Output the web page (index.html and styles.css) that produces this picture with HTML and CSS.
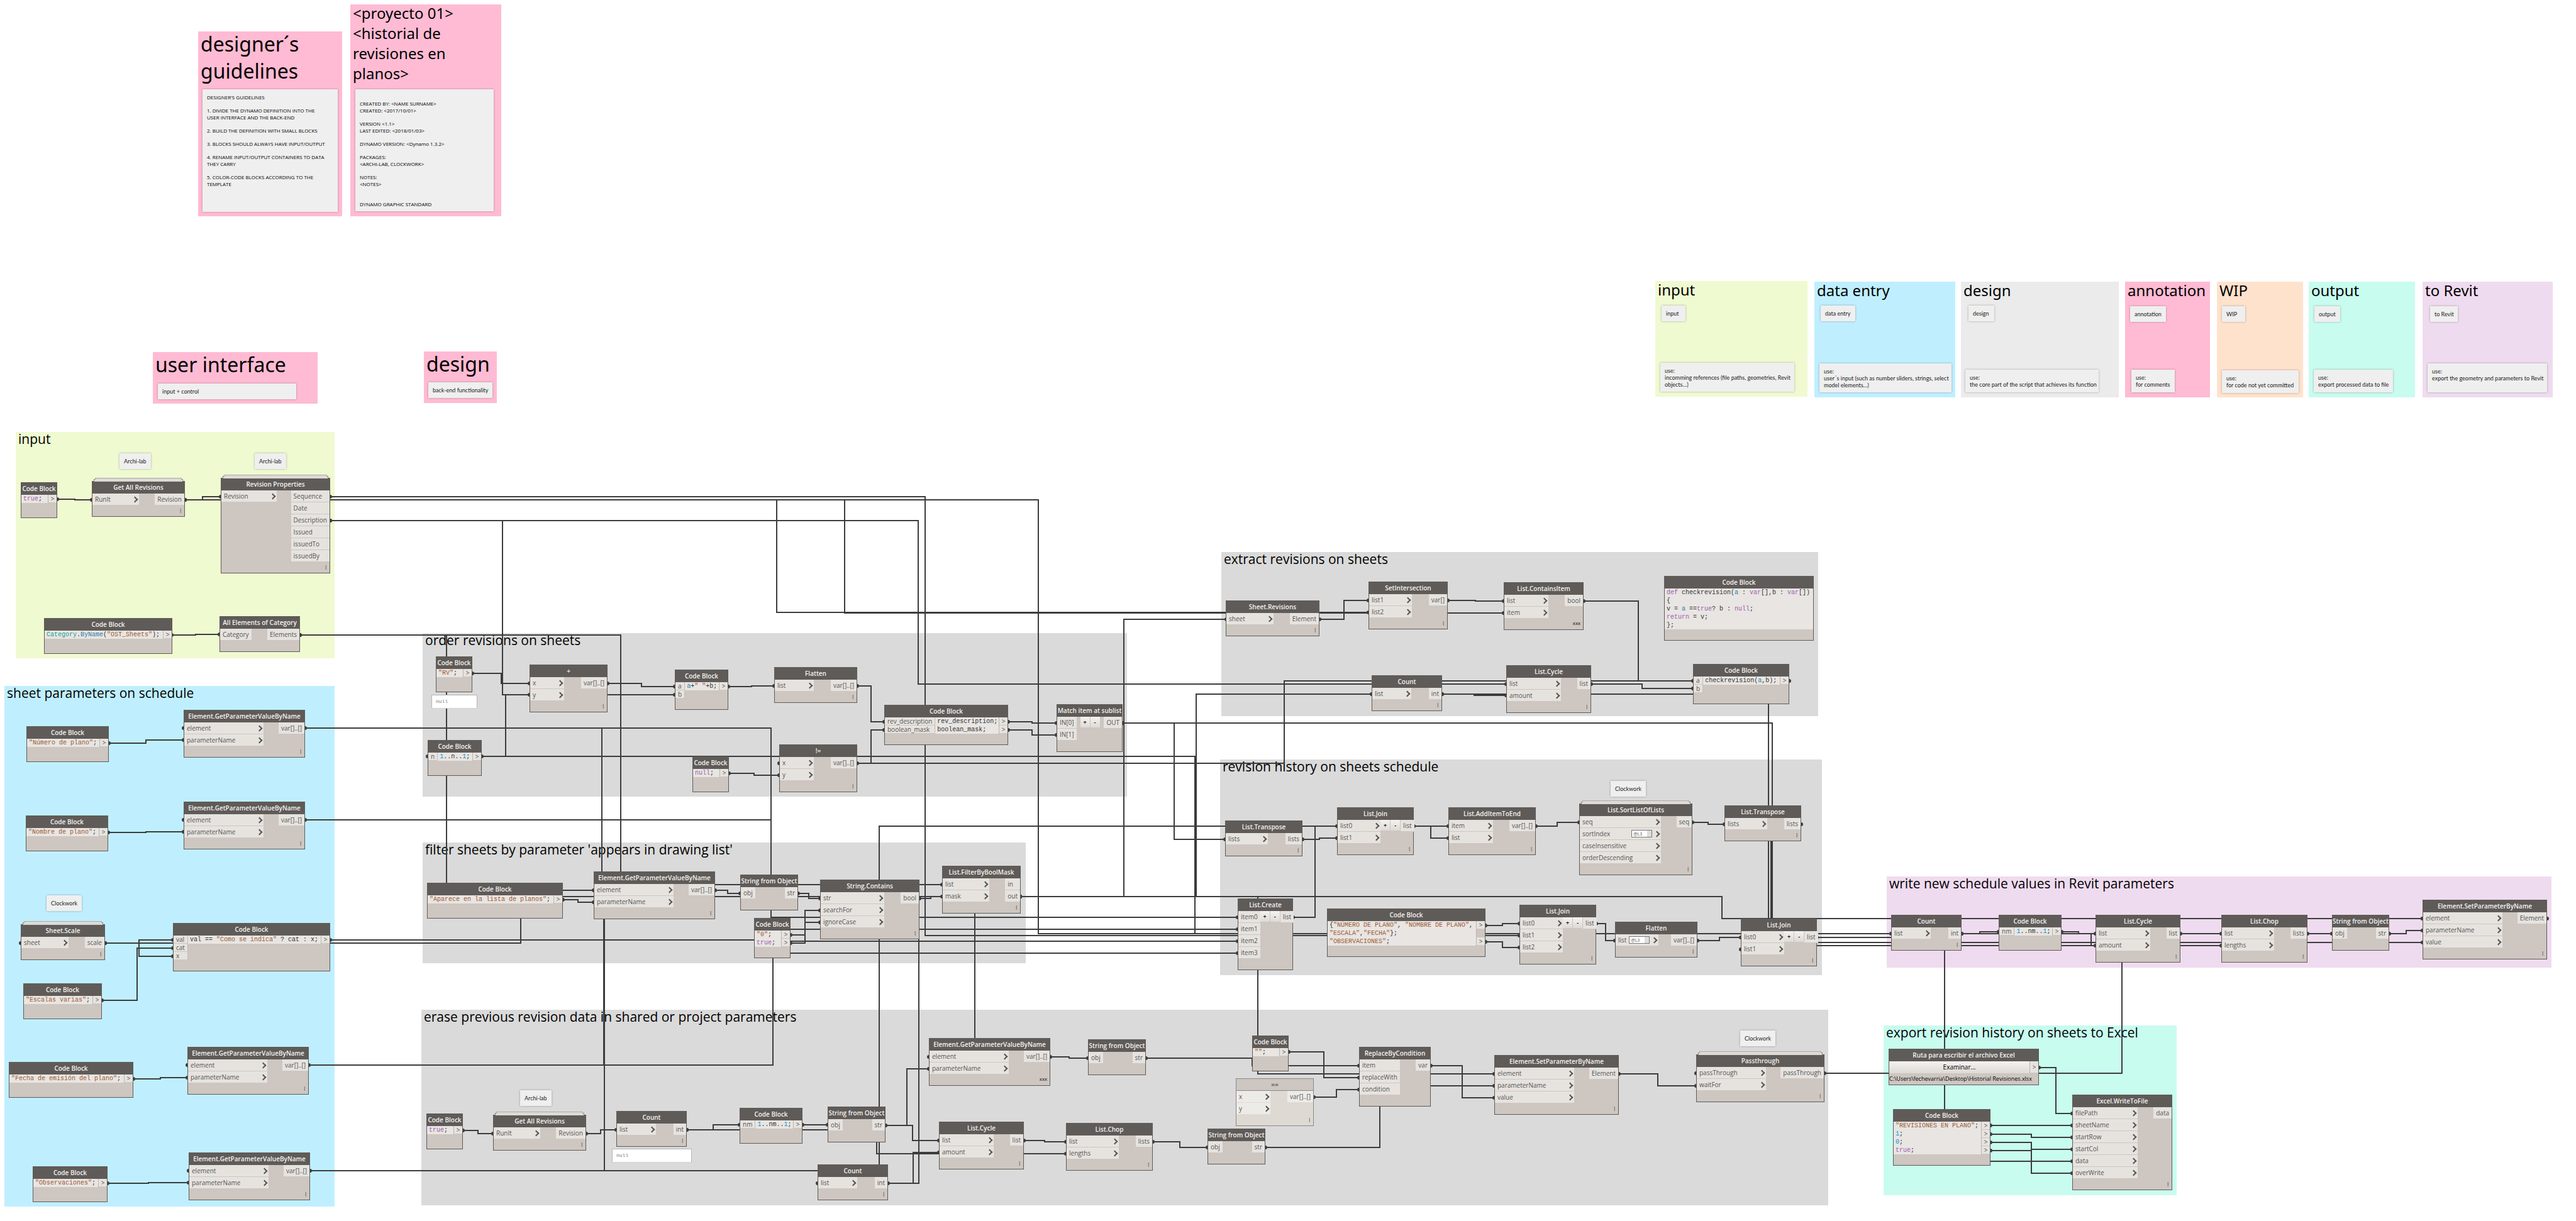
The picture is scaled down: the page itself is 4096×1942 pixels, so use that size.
FILE: index.html
```html
<!DOCTYPE html>
<html lang="es">
<head>
<meta charset="utf-8">
<title>Historial de revisiones en planos</title>
<link rel="stylesheet" href="styles.css">
</head>
<body>
<main class="workspace">

<!-- Groups -->
<section class="group pink" style="--x:315px;--y:50px;--w:229px;--h:294px"><h2 class="xl">designer´s<br>guidelines</h2></section>
<section class="group pink" style="--x:557px;--y:7px;--w:240px;--h:337px"><h2 class="lg">&lt;proyecto 01&gt;<br>&lt;historial de<br>revisiones en<br>planos&gt;</h2></section>
<section class="group pink" style="--x:243px;--y:560px;--w:262px;--h:82px"><h2 class="xl">user interface</h2></section>
<section class="group pink" style="--x:674px;--y:559px;--w:116px;--h:82px"><h2 class="xl">design</h2></section>
<section class="group lime" style="--x:2632px;--y:447px;--w:242px;--h:184px"><h2 class="lg">input</h2></section>
<section class="group sky" style="--x:2885px;--y:448px;--w:224px;--h:184px"><h2 class="lg">data entry</h2></section>
<section class="group silver" style="--x:3118px;--y:448px;--w:251px;--h:184px"><h2 class="lg">design</h2></section>
<section class="group pink" style="--x:3379px;--y:448px;--w:135px;--h:184px"><h2 class="lg">annotation</h2></section>
<section class="group peach" style="--x:3525px;--y:448px;--w:137px;--h:184px"><h2 class="lg">WIP</h2></section>
<section class="group mint" style="--x:3671px;--y:448px;--w:169px;--h:184px"><h2 class="lg">output</h2></section>
<section class="group lilac" style="--x:3852px;--y:448px;--w:207px;--h:184px"><h2 class="lg">to Revit</h2></section>
<section class="group lime" style="--x:25px;--y:687px;--w:507px;--h:360px"><h2>input</h2></section>
<section class="group sky" style="--x:7px;--y:1091px;--w:525px;--h:828px"><h2>sheet parameters on schedule</h2></section>
<section class="group gray" style="--x:672px;--y:1007px;--w:1120px;--h:260px"><h2>order revisions on sheets</h2></section>
<section class="group gray" style="--x:672px;--y:1340px;--w:959px;--h:192px"><h2>filter sheets by parameter 'appears in drawing list'</h2></section>
<section class="group gray" style="--x:670px;--y:1606px;--w:2237px;--h:311px"><h2>erase previous revision data in shared or project parameters</h2></section>
<section class="group gray" style="--x:1942px;--y:878px;--w:949px;--h:261px"><h2>extract revisions on sheets</h2></section>
<section class="group gray" style="--x:1940px;--y:1208px;--w:957px;--h:343px"><h2>revision history on sheets schedule</h2></section>
<section class="group lilac" style="--x:3000px;--y:1394px;--w:1057px;--h:145px"><h2>write new schedule values in Revit parameters</h2></section>
<section class="group mint" style="--x:2995px;--y:1631px;--w:466px;--h:270px"><h2>export revision history on sheets to Excel</h2></section>

<!-- Connectors -->
<svg class="wires" aria-hidden="true">
<defs><marker id="dot" markerUnits="userSpaceOnUse" markerWidth="6" markerHeight="6" refX="3" refY="3"><circle cx="3" cy="3" r="3"/></marker></defs>
<path d="M91 794H119V795H146"/>
<path d="M294 795H322V790H351"/>
<path d="M294 795H1651V1485H3007"/>
<path d="M294 795H1235V974H2176"/>
<path d="M294 795H1343V975H2391"/>
<path d="M525 790H1471V1488H2416"/>
<path d="M525 828H1460V1088H2395"/>
<path d="M525 828H799V1105H1073"/>
<path d="M273 1010H311V1009H349"/>
<path d="M477 1010H710V1416H944"/>
<path d="M477 1010H987V1407H1498"/>
<path d="M173 1182H232V1177H292"/>
<path d="M172 1324H232V1323H292"/>
<path d="M167 1500H221V1495H275"/>
<path d="M167 1500H221V1521H275"/>
<path d="M162 1591H218V1508H275"/>
<path d="M212 1716H255V1714H298"/>
<path d="M171 1882H236V1881H300"/>
<path d="M485 1158H1226V1459H1968"/>
<path d="M485 1304H1226V1478H1968"/>
<path d="M525 1495H1229V1497H1968"/>
<path d="M491 1694H1229V1516H1968"/>
<path d="M493 1862H1398V1314H2303"/>
<path d="M1622 1426H957V1158H292"/>
<path d="M1622 1426H957V1304H292"/>
<path d="M1622 1426H828V1500H33"/>
<path d="M1622 1426H960V1694H298"/>
<path d="M1622 1426H961V1862H300"/>
<path d="M1622 1426H1461V1882H1300"/>
<path d="M1622 1426H1550V1681H1477"/>
<path d="M1622 1426H2000V1708H2376"/>
<path d="M1622 1426H1787V985H1950"/>
<path d="M1622 1426H1902V1104H2181"/>
<path d="M1622 1426H2738V1461H3852"/>
<path d="M751 1071H797V1087H842"/>
<path d="M766 1203H804V1105H842"/>
<path d="M966 1087H1020V1092H1073"/>
<path d="M1158 1092H1195V1091H1231"/>
<path d="M1363 1091H1385V1148H1406"/>
<path d="M1363 1214H1385V1161H1406"/>
<path d="M1159 1230H1199V1233H1239"/>
<path d="M1603 1148H1641V1150H1680"/>
<path d="M1603 1161H1641V1169H1680"/>
<path d="M3119 1485H1900V1203H680"/>
<path d="M2845 1083H2042V1214H1239"/>
<path d="M1785 1150H1867V1335H1948"/>
<path d="M1785 1150H2818V1499H3852"/>
<path d="M895 1431H919V1435H944"/>
<path d="M1137 1416H1157V1421H1177"/>
<path d="M1269 1421H1286V1429H1304"/>
<path d="M1462 1429H1480V1426H1498"/>
<path d="M1257 1487H1280V1448H1304"/>
<path d="M1257 1500H1280V1467H1304"/>
<path d="M2098 985H2137V955H2176"/>
<path d="M2302 955H2346V956H2391"/>
<path d="M2518 956H2605V1083H2692"/>
<path d="M2293 1104H2344V1106H2395"/>
<path d="M2293 1104H2812V1504H3332"/>
<path d="M2530 1088H2611V1095H2692"/>
<path d="M2071 1335H2098V1333H2126"/>
<path d="M2056 1459H2091V1314H2126"/>
<path d="M2248 1314H2275V1333H2303"/>
<path d="M2442 1314H2476V1308H2511"/>
<path d="M2691 1308H2716V1311H2742"/>
<path d="M2864 1311H2816V1510H2768"/>
<path d="M2362 1472H2389V1469H2416"/>
<path d="M2362 1498H2389V1507H2416"/>
<path d="M2538 1469H2553V1496H2568"/>
<path d="M2699 1496H2734V1491H2768"/>
<path d="M2889 1491H3092V1847H3295"/>
<path d="M3119 1485H3148V1482H3178"/>
<path d="M3278 1482H3305V1485H3332"/>
<path d="M3119 1485H3325V1504H3532"/>
<path d="M3467 1485H3532"/>
<path d="M3669 1485H3708"/>
<path d="M3799 1485H3826V1480H3852"/>
<path d="M2901 1707H3374V1461H3852"/>
<path d="M3242 1698H3269V1771H3295"/>
<path d="M3165 1790H3295"/>
<path d="M3165 1804H3230V1809H3295"/>
<path d="M3165 1817H3230V1828H3295"/>
<path d="M3165 1830H3230V1866H3295"/>
<path d="M736 1798H760V1803H784"/>
<path d="M932 1803H955V1797H980"/>
<path d="M1092 1797H1134V1789H1176"/>
<path d="M1092 1797H1394V1835H1695"/>
<path d="M1276 1789H1316"/>
<path d="M1408 1790H1451V1814H1493"/>
<path d="M1408 1790H1442V1700H1477"/>
<path d="M1412 1882H1452V1833H1493"/>
<path d="M1670 1681H1700V1683H1730"/>
<path d="M1822 1683H1991V1695H2161"/>
<path d="M2049 1673H2105V1714H2161"/>
<path d="M2089 1745H2125V1733H2161"/>
<path d="M2275 1695H2325V1746H2376"/>
<path d="M2574 1708H2636V1727H2697"/>
<path d="M1628 1814H1661V1816H1695"/>
<path d="M1833 1816H1876V1825H1920"/>
<path d="M2012 1825H2194V1727H2376"/>
<circle cx="4050" cy="1461" r="3"/>
<circle cx="2697" cy="1707" r="3"/>
</svg>

<!-- Notes -->
<div class="note caps" style="--x:322px;--y:142px;--w:215px;--h:195px"><p>DESIGNER'S GUIDELINES</p><p>1. DIVIDE THE DYNAMO DEFINITION INTO THE<br>USER INTERFACE AND THE BACK-END</p><p>2. BUILD THE DEFINITION WITH SMALL BLOCKS</p><p>3. BLOCKS SHOULD ALWAYS HAVE INPUT/OUTPUT</p><p>4. RENAME INPUT/OUTPUT CONTAINERS TO DATA<br>THEY CARRY</p><p>5. COLOR-CODE BLOCKS ACCORDING TO THE<br>TEMPLATE</p></div>
<div class="note caps lead" style="--x:565px;--y:142px;--w:220px;--h:194px"><p>CREATED BY: &lt;NAME SURNAME&gt;<br>CREATED: &lt;2017/10/01&gt;</p><p>VERSION &lt;1.1&gt;<br>LAST EDITED: &lt;2018/01/03&gt;</p><p>DYNAMO VERSION: &lt;Dynamo 1.3.2&gt;</p><p>PACKAGES:<br>&lt;ARCHI-LAB, CLOCKWORK&gt;</p><p>NOTES:<br>&lt;NOTES&gt;</p><p class="last">DYNAMO GRAPHIC STANDARD</p></div>
<div class="note" style="--x:251px;--y:610px;--w:220px;--h:25px"><p>input + control</p></div>
<div class="note" style="--x:681px;--y:608px;--w:102px;--h:25px"><p>back-end functionality</p></div>
<div class="note" style="--x:2642px;--y:486px;--w:38px;--h:25px"><p>input</p></div>
<div class="note" style="--x:2895px;--y:486px;--w:55px;--h:25px"><p>data entry</p></div>
<div class="note" style="--x:3130px;--y:486px;--w:41px;--h:25px"><p>design</p></div>
<div class="note" style="--x:3387px;--y:487px;--w:57px;--h:25px"><p>annotation</p></div>
<div class="note" style="--x:3533px;--y:487px;--w:37px;--h:25px"><p>WIP</p></div>
<div class="note" style="--x:3680px;--y:487px;--w:41px;--h:25px"><p>output</p></div>
<div class="note" style="--x:3864px;--y:487px;--w:44px;--h:25px"><p>to Revit</p></div>
<div class="note" style="--x:2640px;--y:577px;--w:213px;--h:46px"><p>use:<br>incomming references (file paths, geometries, Revit<br>objects…)</p></div>
<div class="note" style="--x:2893px;--y:578px;--w:210px;--h:46px"><p>use:<br>user´s input (such as number sliders, strings, select<br>model elements…)</p></div>
<div class="note" style="--x:3125px;--y:588px;--w:212px;--h:36px"><p>use:<br>the core part of the script that achieves its function</p></div>
<div class="note" style="--x:3389px;--y:588px;--w:69px;--h:36px"><p>use:<br>for comments</p></div>
<div class="note" style="--x:3533px;--y:589px;--w:122px;--h:36px"><p>use:<br>for code not yet committed</p></div>
<div class="note" style="--x:3679px;--y:588px;--w:126px;--h:36px"><p>use:<br>export processed data to file</p></div>
<div class="note" style="--x:3860px;--y:578px;--w:190px;--h:46px"><p>use:<br>export the geometry and parameters to Revit</p></div>
<div class="note" style="--x:190px;--y:721px;--w:50px;--h:25px"><p>Archi-lab</p></div>
<div class="note" style="--x:405px;--y:721px;--w:50px;--h:25px"><p>Archi-lab</p></div>
<div class="note" style="--x:74px;--y:1424px;--w:56px;--h:25px"><p>Clockwork</p></div>
<div class="note" style="--x:827px;--y:1734px;--w:50px;--h:25px"><p>Archi-lab</p></div>
<div class="note" style="--x:2767px;--y:1639px;--w:56px;--h:25px"><p>Clockwork</p></div>
<div class="note" style="--x:2561px;--y:1242px;--w:56px;--h:25px"><p>Clockwork</p></div>
<output class="preview" style="--x:686px;--y:1105px;--w:73px">null</output>
<output class="preview" style="--x:973px;--y:1827px;--w:127px">null</output>

<!-- input -->
<article class="node code" style="--x:33px;--y:767px;--w:58px"><h3>Code Block</h3><div class="ports"><pre><span class="kw">true</span>;</pre><ul class="cout"><li>&gt;</li></ul></div></article>
<article class="node custom" style="--x:146px;--y:765px;--w:148px"><h3>Get All Revisions</h3><div class="ports"><ul class="in"><li>RunIt</li></ul><ul class="out"><li>Revision</li></ul></div><footer>|</footer></article>
<article class="node custom" style="--x:351px;--y:760px;--w:174px"><h3>Revision Properties</h3><div class="ports"><ul class="in"><li>Revision</li></ul><ul class="out"><li>Sequence</li><li>Date</li><li>Description</li><li>Issued</li><li>issuedTo</li><li>issuedBy</li></ul></div><footer>|</footer></article>
<article class="node code" style="--x:70px;--y:983px;--w:204px"><h3>Code Block</h3><div class="ports"><pre><span class="cls">Category</span>.<span class="fn">ByName</span>(<span class="str">"OST_Sheets"</span>);</pre><ul class="cout"><li>&gt;</li></ul></div></article>
<article class="node" style="--x:349px;--y:980px;--w:128px"><h3>All Elements of Category</h3><div class="ports"><ul class="in plain"><li>Category</li></ul><ul class="out"><li>Elements</li></ul></div><footer></footer></article>

<!-- sheet parameters on schedule -->
<article class="node code" style="--x:42px;--y:1155px;--w:131px"><h3>Code Block</h3><div class="ports"><pre><span class="str">"Número de plano"</span>;</pre><ul class="cout"><li>&gt;</li></ul></div></article>
<article class="node" style="--x:292px;--y:1129px;--w:193px"><h3>Element.GetParameterValueByName</h3><div class="ports"><ul class="in"><li>element</li><li>parameterName</li></ul><ul class="out"><li>var[]..[]</li></ul></div><footer>|</footer></article>
<article class="node code" style="--x:41px;--y:1297px;--w:131px"><h3>Code Block</h3><div class="ports"><pre><span class="str">"Nombre de plano"</span>;</pre><ul class="cout"><li>&gt;</li></ul></div></article>
<article class="node" style="--x:292px;--y:1275px;--w:193px"><h3>Element.GetParameterValueByName</h3><div class="ports"><ul class="in"><li>element</li><li>parameterName</li></ul><ul class="out"><li>var[]..[]</li></ul></div><footer>|</footer></article>
<article class="node custom" style="--x:33px;--y:1470px;--w:134px"><h3>Sheet.Scale</h3><div class="ports"><ul class="in"><li>sheet</li></ul><ul class="out"><li>scale</li></ul></div><footer>|</footer></article>
<article class="node code" style="--x:275px;--y:1468px;--w:250px"><h3>Code Block</h3><div class="ports"><ul class="cin"><li>val</li><li>cat</li><li>x</li></ul><pre>val == <span class="str">"Como se indica"</span> ? cat : x;</pre><ul class="cout"><li>&gt;</li></ul></div></article>
<article class="node code" style="--x:37px;--y:1564px;--w:125px"><h3>Code Block</h3><div class="ports"><pre><span class="str">"Escalas varias"</span>;</pre><ul class="cout"><li>&gt;</li></ul></div></article>
<article class="node code" style="--x:14px;--y:1689px;--w:198px"><h3>Code Block</h3><div class="ports"><pre><span class="str">"Fecha de emisión del plano"</span>;</pre><ul class="cout"><li>&gt;</li></ul></div></article>
<article class="node" style="--x:298px;--y:1665px;--w:193px"><h3>Element.GetParameterValueByName</h3><div class="ports"><ul class="in"><li>element</li><li>parameterName</li></ul><ul class="out"><li>var[]..[]</li></ul></div><footer>|</footer></article>
<article class="node" style="--x:300px;--y:1833px;--w:193px"><h3>Element.GetParameterValueByName</h3><div class="ports"><ul class="in"><li>element</li><li>parameterName</li></ul><ul class="out"><li>var[]..[]</li></ul></div><footer>|</footer></article>
<article class="node code" style="--x:52px;--y:1855px;--w:119px"><h3>Code Block</h3><div class="ports"><pre><span class="str">"Observaciones"</span>;</pre><ul class="cout"><li>&gt;</li></ul></div></article>

<!-- order revisions on sheets -->
<article class="node code" style="--x:693px;--y:1044px;--w:58px"><h3>Code Block</h3><div class="ports"><pre><span class="str">"RV"</span>;</pre><ul class="cout"><li>&gt;</li></ul></div></article>
<article class="node" style="--x:842px;--y:1057px;--w:124px"><h3>+</h3><div class="ports"><ul class="in"><li>x</li><li>y</li></ul><ul class="out"><li>var[]..[]</li></ul></div><footer>|</footer></article>
<article class="node code" style="--x:1073px;--y:1065px;--w:85px"><h3>Code Block</h3><div class="ports"><ul class="cin"><li>a</li><li>b</li></ul><pre><span class="id">a</span>+<span class="str">" "</span>+b;</pre><ul class="cout"><li>&gt;</li></ul></div></article>
<article class="node" style="--x:1231px;--y:1061px;--w:132px"><h3>Flatten</h3><div class="ports"><ul class="in"><li>list</li></ul><ul class="out"><li>var[]..[]</li></ul></div><footer>|</footer></article>
<article class="node code" style="--x:1406px;--y:1121px;--w:197px"><h3>Code Block</h3><div class="ports"><ul class="cin"><li>rev_description</li><li>boolean_mask</li></ul><pre><code>rev_description;</code><code>boolean_mask;</code></pre><ul class="cout"><li>&gt;</li><li>&gt;</li></ul></div></article>
<article class="node" style="--x:1680px;--y:1120px;--w:105px"><h3>Match item at sublist</h3><div class="ports"><ul class="in plain"><li>IN[0]</li><li>IN[1]</li></ul><div class="vary"><button>+</button><button>-</button></div><ul class="out"><li>OUT</li></ul></div><footer></footer></article>
<article class="node code" style="--x:680px;--y:1177px;--w:86px"><h3>Code Block</h3><div class="ports"><ul class="cin"><li>n</li></ul><pre><span class="num">1</span>..n..<span class="num">1</span>;</pre><ul class="cout"><li>&gt;</li></ul></div></article>
<article class="node code" style="--x:1101px;--y:1203px;--w:58px"><h3>Code Block</h3><div class="ports"><pre><span class="kw">null</span>;</pre><ul class="cout"><li>&gt;</li></ul></div></article>
<article class="node" style="--x:1239px;--y:1184px;--w:124px"><h3>!=</h3><div class="ports"><ul class="in"><li>x</li><li>y</li></ul><ul class="out"><li>var[]..[]</li></ul></div><footer>|</footer></article>

<!-- filter sheets -->
<article class="node code" style="--x:679px;--y:1404px;--w:216px"><h3>Code Block</h3><div class="ports"><pre><span class="str">"Aparece en la lista de planos"</span>;</pre><ul class="cout"><li>&gt;</li></ul></div></article>
<article class="node" style="--x:944px;--y:1386px;--w:193px"><h3>Element.GetParameterValueByName</h3><div class="ports"><ul class="in"><li>element</li><li>parameterName</li></ul><ul class="out"><li>var[]..[]</li></ul></div><footer>|</footer></article>
<article class="node" style="--x:1177px;--y:1391px;--w:92px"><h3>String from Object</h3><div class="ports"><ul class="in plain"><li>obj</li></ul><ul class="out"><li>str</li></ul></div><footer></footer></article>
<article class="node" style="--x:1304px;--y:1399px;--w:158px"><h3>String.Contains</h3><div class="ports"><ul class="in"><li>str</li><li>searchFor</li><li>ignoreCase</li></ul><ul class="out"><li>bool</li></ul></div><footer>|</footer></article>
<article class="node code" style="--x:1199px;--y:1460px;--w:58px"><h3>Code Block</h3><div class="ports"><pre><code><span class="str">"0"</span>;</code><code><span class="kw">true</span>;</code></pre><ul class="cout"><li>&gt;</li><li>&gt;</li></ul></div></article>
<article class="node" style="--x:1498px;--y:1377px;--w:125px"><h3>List.FilterByBoolMask</h3><div class="ports"><ul class="in"><li>list</li><li>mask</li></ul><ul class="out"><li>in</li><li>out</li></ul></div><footer>|</footer></article>

<!-- erase previous revision data -->
<article class="node code" style="--x:678px;--y:1771px;--w:58px"><h3>Code Block</h3><div class="ports"><pre><span class="kw">true</span>;</pre><ul class="cout"><li>&gt;</li></ul></div></article>
<article class="node custom" style="--x:784px;--y:1773px;--w:148px"><h3>Get All Revisions</h3><div class="ports"><ul class="in"><li>RunIt</li></ul><ul class="out"><li>Revision</li></ul></div><footer>|</footer></article>
<article class="node" style="--x:980px;--y:1767px;--w:112px"><h3>Count</h3><div class="ports"><ul class="in"><li>list</li></ul><ul class="out"><li>int</li></ul></div><footer>|</footer></article>
<article class="node code" style="--x:1176px;--y:1762px;--w:100px"><h3>Code Block</h3><div class="ports"><ul class="cin"><li>nm</li></ul><pre><span class="num">1</span>..nm..<span class="num">1</span>;</pre><ul class="cout"><li>&gt;</li></ul></div></article>
<article class="node" style="--x:1316px;--y:1760px;--w:92px"><h3>String from Object</h3><div class="ports"><ul class="in plain"><li>obj</li></ul><ul class="out"><li>str</li></ul></div><footer></footer></article>
<article class="node" style="--x:1300px;--y:1852px;--w:112px"><h3>Count</h3><div class="ports"><ul class="in"><li>list</li></ul><ul class="out"><li>int</li></ul></div><footer>|</footer></article>
<article class="node" style="--x:1493px;--y:1784px;--w:135px"><h3>List.Cycle</h3><div class="ports"><ul class="in"><li>list</li><li>amount</li></ul><ul class="out"><li>list</li></ul></div><footer>|</footer></article>
<article class="node" style="--x:1477px;--y:1651px;--w:193px"><h3>Element.GetParameterValueByName</h3><div class="ports"><ul class="in"><li>element</li><li>parameterName</li></ul><ul class="out"><li>var[]..[]</li></ul></div><footer>xxx</footer></article>
<article class="node" style="--x:1730px;--y:1653px;--w:92px"><h3>String from Object</h3><div class="ports"><ul class="in plain"><li>obj</li></ul><ul class="out"><li>str</li></ul></div><footer></footer></article>
<article class="node code" style="--x:1991px;--y:1647px;--w:58px"><h3>Code Block</h3><div class="ports"><pre><span class="str">""</span>;</pre><ul class="cout"><li>&gt;</li></ul></div></article>
<article class="node" style="--x:2161px;--y:1665px;--w:114px"><h3>ReplaceByCondition</h3><div class="ports"><ul class="in plain"><li>item</li><li>replaceWith</li><li>condition</li></ul><ul class="out"><li>var</li></ul></div><footer></footer></article>
<article class="node frozen" style="--x:1965px;--y:1715px;--w:124px"><h3>==</h3><div class="ports"><ul class="in"><li>x</li><li>y</li></ul><ul class="out"><li>var[]..[]</li></ul></div><footer>|</footer></article>
<article class="node" style="--x:2376px;--y:1678px;--w:198px"><h3>Element.SetParameterByName</h3><div class="ports"><ul class="in"><li>element</li><li>parameterName</li><li>value</li></ul><ul class="out"><li>Element</li></ul></div><footer>|</footer></article>
<article class="node custom" style="--x:2697px;--y:1677px;--w:204px"><h3>Passthrough</h3><div class="ports"><ul class="in"><li>passThrough</li><li>waitFor</li></ul><ul class="out"><li>passThrough</li></ul></div><footer>|</footer></article>
<article class="node" style="--x:1695px;--y:1786px;--w:138px"><h3>List.Chop</h3><div class="ports"><ul class="in"><li>list</li><li>lengths</li></ul><ul class="out"><li>lists</li></ul></div><footer>|</footer></article>
<article class="node" style="--x:1920px;--y:1795px;--w:92px"><h3>String from Object</h3><div class="ports"><ul class="in plain"><li>obj</li></ul><ul class="out"><li>str</li></ul></div><footer></footer></article>

<!-- extract revisions on sheets -->
<article class="node" style="--x:1949px;--y:955px;--w:149px"><h3>Sheet.Revisions</h3><div class="ports"><ul class="in"><li>sheet</li></ul><ul class="out"><li>Element</li></ul></div><footer>|</footer></article>
<article class="node" style="--x:2176px;--y:925px;--w:126px"><h3>SetIntersection</h3><div class="ports"><ul class="in"><li>list1</li><li>list2</li></ul><ul class="out"><li>var[]</li></ul></div><footer>|</footer></article>
<article class="node" style="--x:2391px;--y:926px;--w:127px"><h3>List.ContainsItem</h3><div class="ports"><ul class="in"><li>list</li><li>item</li></ul><ul class="out"><li>bool</li></ul></div><footer>xxx</footer></article>
<article class="node code" style="--x:2646px;--y:916px;--w:238px"><h3>Code Block</h3><div class="ports"><pre><code><span class="kw">def</span> checkrevision(<span class="id">a</span> : <span class="kw">var</span>[],b : <span class="kw">var</span>[])</code><code>{</code><code>v = <span class="id">a</span> ==<span class="kw">true</span>? b : <span class="kw">null</span>;</code><code><span class="kw">return</span> = v;</code><code>};</code></pre></div></article>
<article class="node" style="--x:2181px;--y:1074px;--w:112px"><h3>Count</h3><div class="ports"><ul class="in"><li>list</li></ul><ul class="out"><li>int</li></ul></div><footer>|</footer></article>
<article class="node" style="--x:2395px;--y:1058px;--w:135px"><h3>List.Cycle</h3><div class="ports"><ul class="in"><li>list</li><li>amount</li></ul><ul class="out"><li>list</li></ul></div><footer>|</footer></article>
<article class="node code" style="--x:2692px;--y:1056px;--w:153px"><h3>Code Block</h3><div class="ports"><ul class="cin"><li>a</li><li>b</li></ul><pre>checkrevision(<span class="id">a</span>,b);</pre><ul class="cout"><li>&gt;</li></ul></div></article>

<!-- revision history on sheets schedule -->
<article class="node" style="--x:1948px;--y:1305px;--w:123px"><h3>List.Transpose</h3><div class="ports"><ul class="in"><li>lists</li></ul><ul class="out"><li>lists</li></ul></div><footer>|</footer></article>
<article class="node" style="--x:2126px;--y:1284px;--w:122px"><h3>List.Join</h3><div class="ports"><ul class="in"><li>list0</li><li>list1</li></ul><div class="vary"><button>+</button><button>-</button></div><ul class="out"><li>list</li></ul></div><footer>|</footer></article>
<article class="node" style="--x:2303px;--y:1284px;--w:139px"><h3>List.AddItemToEnd</h3><div class="ports"><ul class="in"><li>item</li><li>list</li></ul><ul class="out"><li>var[]..[]</li></ul></div><footer>|</footer></article>
<article class="node custom" style="--x:2511px;--y:1278px;--w:180px"><h3>List.SortListOfLists</h3><div class="ports"><ul class="in"><li>seq</li><li class="leveled">sortIndex<input class="level" aria-label="sortIndex level" value="@L3"></li><li>caseInsensitive</li><li>orderDescending</li></ul><ul class="out"><li>seq</li></ul></div><footer>|</footer></article>
<article class="node" style="--x:2742px;--y:1281px;--w:122px"><h3>List.Transpose</h3><div class="ports"><ul class="in"><li>lists</li></ul><ul class="out"><li>lists</li></ul></div><footer>|</footer></article>
<article class="node" style="--x:1968px;--y:1429px;--w:88px"><h3>List.Create</h3><div class="ports"><ul class="in plain"><li>item0</li><li>item1</li><li>item2</li><li>item3</li></ul><div class="vary"><button>+</button><button>-</button></div><ul class="out"><li>list</li></ul></div><footer></footer></article>
<article class="node code" style="--x:2110px;--y:1445px;--w:252px"><h3>Code Block</h3><div class="ports"><pre><code>{<span class="str">"NÚMERO DE PLANO"</span>, <span class="str">"NOMBRE DE PLANO"</span>,</code><code><span class="str">"ESCALA"</span>,<span class="str">"FECHA"</span>};</code><code><span class="str">"OBSERVACIONES"</span>;</code></pre><ul class="cout"><li>&gt;</li><li class="blank"></li><li>&gt;</li></ul></div></article>
<article class="node" style="--x:2416px;--y:1439px;--w:122px"><h3>List.Join</h3><div class="ports"><ul class="in"><li>list0</li><li>list1</li><li>list2</li></ul><div class="vary"><button>+</button><button>-</button></div><ul class="out"><li>list</li></ul></div><footer>|</footer></article>
<article class="node" style="--x:2568px;--y:1466px;--w:131px"><h3>Flatten</h3><div class="ports"><ul class="in"><li class="leveled">list<input class="level" aria-label="list level" value="@L3"></li></ul><ul class="out"><li>var[]..[]</li></ul></div><footer>|</footer></article>
<article class="node" style="--x:2768px;--y:1461px;--w:121px"><h3>List.Join</h3><div class="ports"><ul class="in"><li>list0</li><li>list1</li></ul><div class="vary"><button>+</button><button>-</button></div><ul class="out"><li>list</li></ul></div><footer>|</footer></article>

<!-- write new schedule values -->
<article class="node" style="--x:3007px;--y:1455px;--w:112px"><h3>Count</h3><div class="ports"><ul class="in"><li>list</li></ul><ul class="out"><li>int</li></ul></div><footer>|</footer></article>
<article class="node code" style="--x:3178px;--y:1455px;--w:100px"><h3>Code Block</h3><div class="ports"><ul class="cin"><li>nm</li></ul><pre><span class="num">1</span>..nm..<span class="num">1</span>;</pre><ul class="cout"><li>&gt;</li></ul></div></article>
<article class="node" style="--x:3332px;--y:1455px;--w:135px"><h3>List.Cycle</h3><div class="ports"><ul class="in"><li>list</li><li>amount</li></ul><ul class="out"><li>list</li></ul></div><footer>|</footer></article>
<article class="node" style="--x:3532px;--y:1455px;--w:137px"><h3>List.Chop</h3><div class="ports"><ul class="in"><li>list</li><li>lengths</li></ul><ul class="out"><li>lists</li></ul></div><footer>|</footer></article>
<article class="node" style="--x:3708px;--y:1455px;--w:91px"><h3>String from Object</h3><div class="ports"><ul class="in plain"><li>obj</li></ul><ul class="out"><li>str</li></ul></div><footer></footer></article>
<article class="node" style="--x:3852px;--y:1431px;--w:198px"><h3>Element.SetParameterByName</h3><div class="ports"><ul class="in"><li>element</li><li>parameterName</li><li>value</li></ul><ul class="out"><li>Element</li></ul></div><footer>|</footer></article>

<!-- export to Excel -->
<article class="node file" style="--x:3003px;--y:1668px;--w:239px"><h3>Ruta para escribir el archivo Excel</h3><div class="ports"><button class="browse">Examinar...</button><ul class="cout"><li>&gt;</li></ul></div><p class="path">C:\Users\fechevarria\Desktop\Historial Revisiones.xlsx</p></article>
<article class="node code" style="--x:3010px;--y:1764px;--w:155px"><h3>Code Block</h3><div class="ports"><pre><code><span class="str">"REVISIONES EN PLANO"</span>;</code><code><span class="num">1</span>;</code><code><span class="num">0</span>;</code><code><span class="kw">true</span>;</code></pre><ul class="cout"><li>&gt;</li><li>&gt;</li><li>&gt;</li><li>&gt;</li></ul></div></article>
<article class="node" style="--x:3295px;--y:1741px;--w:159px"><h3>Excel.WriteToFile</h3><div class="ports"><ul class="in"><li>filePath</li><li>sheetName</li><li>startRow</li><li>startCol</li><li>data</li><li>overWrite</li></ul><ul class="out"><li>data</li></ul></div><footer>|</footer></article>

</main>
</body>
</html>
```
FILE: styles.css
```css
* { box-sizing: border-box; }
body { margin: 0; background: #fff; font-family: "Open Sans", "Noto Sans", sans-serif; }
h2, h3, p, ul, pre { margin: 0; padding: 0; }
ul { list-style: none; }

.workspace { position: relative; min-height: 100vh; overflow: hidden; }

/* Everything on the canvas sits at its graph coordinates */
.group, .note, .node, .preview { position: absolute; left: var(--x); top: var(--y); width: var(--w); }

.group { height: var(--h); padding-left: 4px; }
.group h2 { margin-top: -2px; font: 400 21px/26px "Open Sans", sans-serif; color: #000; white-space: nowrap; }
.group h2.lg { font: 400 24px/32px "Noto Sans", sans-serif; }
.group h2.xl { font: 400 32px/43px "Noto Sans", sans-serif; }
.pink { background: #ffbbd3; }
.lime { background: #effad1; }
.sky { background: #bfefff; }
.silver { background: #ebebeb; }
.peach { background: #ffe2cc; }
.mint { background: #c8fcef; }
.lilac { background: #efdbef; }
.gray { background: #dadada; }

.wires { position: absolute; left: 0; top: 0; width: 100%; height: 100%; }
.wires path { fill: none; stroke: #3c3c3c; stroke-width: 2px; marker-start: url(#dot); marker-end: url(#dot); }
.wires circle { fill: #3c3c3c; }

.note { height: var(--h); padding: 7px; background: #efefef; box-shadow: 0 0 3px rgba(0, 0, 0, .3); font-family: Lato, sans-serif; font-size: 9px; line-height: 11px; color: #1c1c1c; white-space: nowrap; }
.note.caps { font-family: "Open Sans", sans-serif; font-size: 8px; color: #000; }
.note.lead { padding-top: 17px; }
.note p + p { margin-top: 10px; }
.note p.last { margin-top: 21px; }

.preview { height: 22px; padding: 0 6px; background: #fff; border: 1px solid #b5b5b5; border-bottom-color: #d5d5d5; font: 8px/19px "Liberation Mono", monospace; color: #777; }

.node { border: 1px solid #5f5b58; background: #cec6c0; color: #555; font-size: 10px; }
.node.code { min-height: 57px; padding-bottom: 17px; }
.node h3 { height: 19px; background: #5f5b58; color: #f4f2f0; font-size: 10px; font-weight: 600; line-height: 19px; text-align: center; white-space: nowrap; }
.node.custom::before, .node.custom::after { content: ""; position: absolute; height: 3px; border: 1px solid #8b8885; border-bottom: 0; background: #dedbd5; }
.node.custom::before { left: 2px; right: 2px; top: -4px; }
.node.custom::after { left: 4px; right: 4px; top: -6px; height: 2px; border-color: #aaa; }
.ports { display: flex; justify-content: space-between; align-items: flex-start; }
.in li, .out li { display: flex; align-items: center; height: 19px; padding: 0 4px; background: #e6e3df; border-bottom: 1px solid #cec6c0; line-height: 18px; white-space: nowrap; }
.in li::after { content: ""; width: 5px; height: 5px; margin-left: auto; border: solid #555; border-width: 2px 2px 0 0; transform: rotate(45deg); }
.in:not(.plain) li { gap: 35px; padding-right: 3px; }
.in:not(.plain) li.leveled { gap: 4px; }
.in:not(.plain) li.leveled::after { margin-left: 0; }
.in.plain li::after { display: none; }
.node footer { height: 17px; padding-right: 4px; font-size: 7px; font-weight: 700; line-height: 16px; text-align: right; }

.level { width: 33px; height: 12px; margin-left: auto; padding: 0 2px; border: 1px solid #777; background: linear-gradient(90deg, #fff 24px, #ddd 24px); font: 7px/10px "Open Sans", sans-serif; color: #555; }

.vary { display: flex; }
.vary button { width: 16px; height: 17px; padding: 0; border: 0; border-right: 1px solid #c9c4c0; background: linear-gradient(#f4f3f1, #dedad5); font: 700 9px/15px "Open Sans", sans-serif; color: #111; }

pre { flex: 1; padding-left: 3px; background: #e8e5e2; color: #333; font: 10px/13px "Liberation Mono", monospace; }
pre code { display: block; font: inherit; }
.cin li, .cout li { height: 13px; background: #e6e3df; border-bottom: 1px solid #cec6c0; font-size: 10px; line-height: 12px; white-space: nowrap; }
.cin { border-right: 1px solid #c3bdb8; }
.cin li { padding: 0 4px; }
.cout { width: 14px; border-left: 1px solid #b9b4b0; text-align: center; }
.cout li.blank { background: none; }
.str { color: #9c5a32; }
.kw { color: #9f5cb0; }
.num { color: #0096e1; }
.id { color: #1784a8; }
.cls { color: #0fa396; }
.fn { color: #2a7fa5; }

.frozen { background: #dedad3; border-color: #8b8885; }
.frozen h3 { background: #cec6c0; color: #555; border-bottom: 1px solid #8b8885; }
.frozen .in li, .frozen .out li { background: #edebe8; border-color: #dedad3; }

.file .cout li { height: 19px; line-height: 18px; }
.browse { flex: 1; height: 19px; padding: 0; border: 0; background: linear-gradient(#f4f3f1, #dedad5); font: 10px/17px "Open Sans", sans-serif; color: #000; }
.path { height: 18px; font-size: 9px; line-height: 18px; color: #000; white-space: nowrap; overflow: hidden; }
```
